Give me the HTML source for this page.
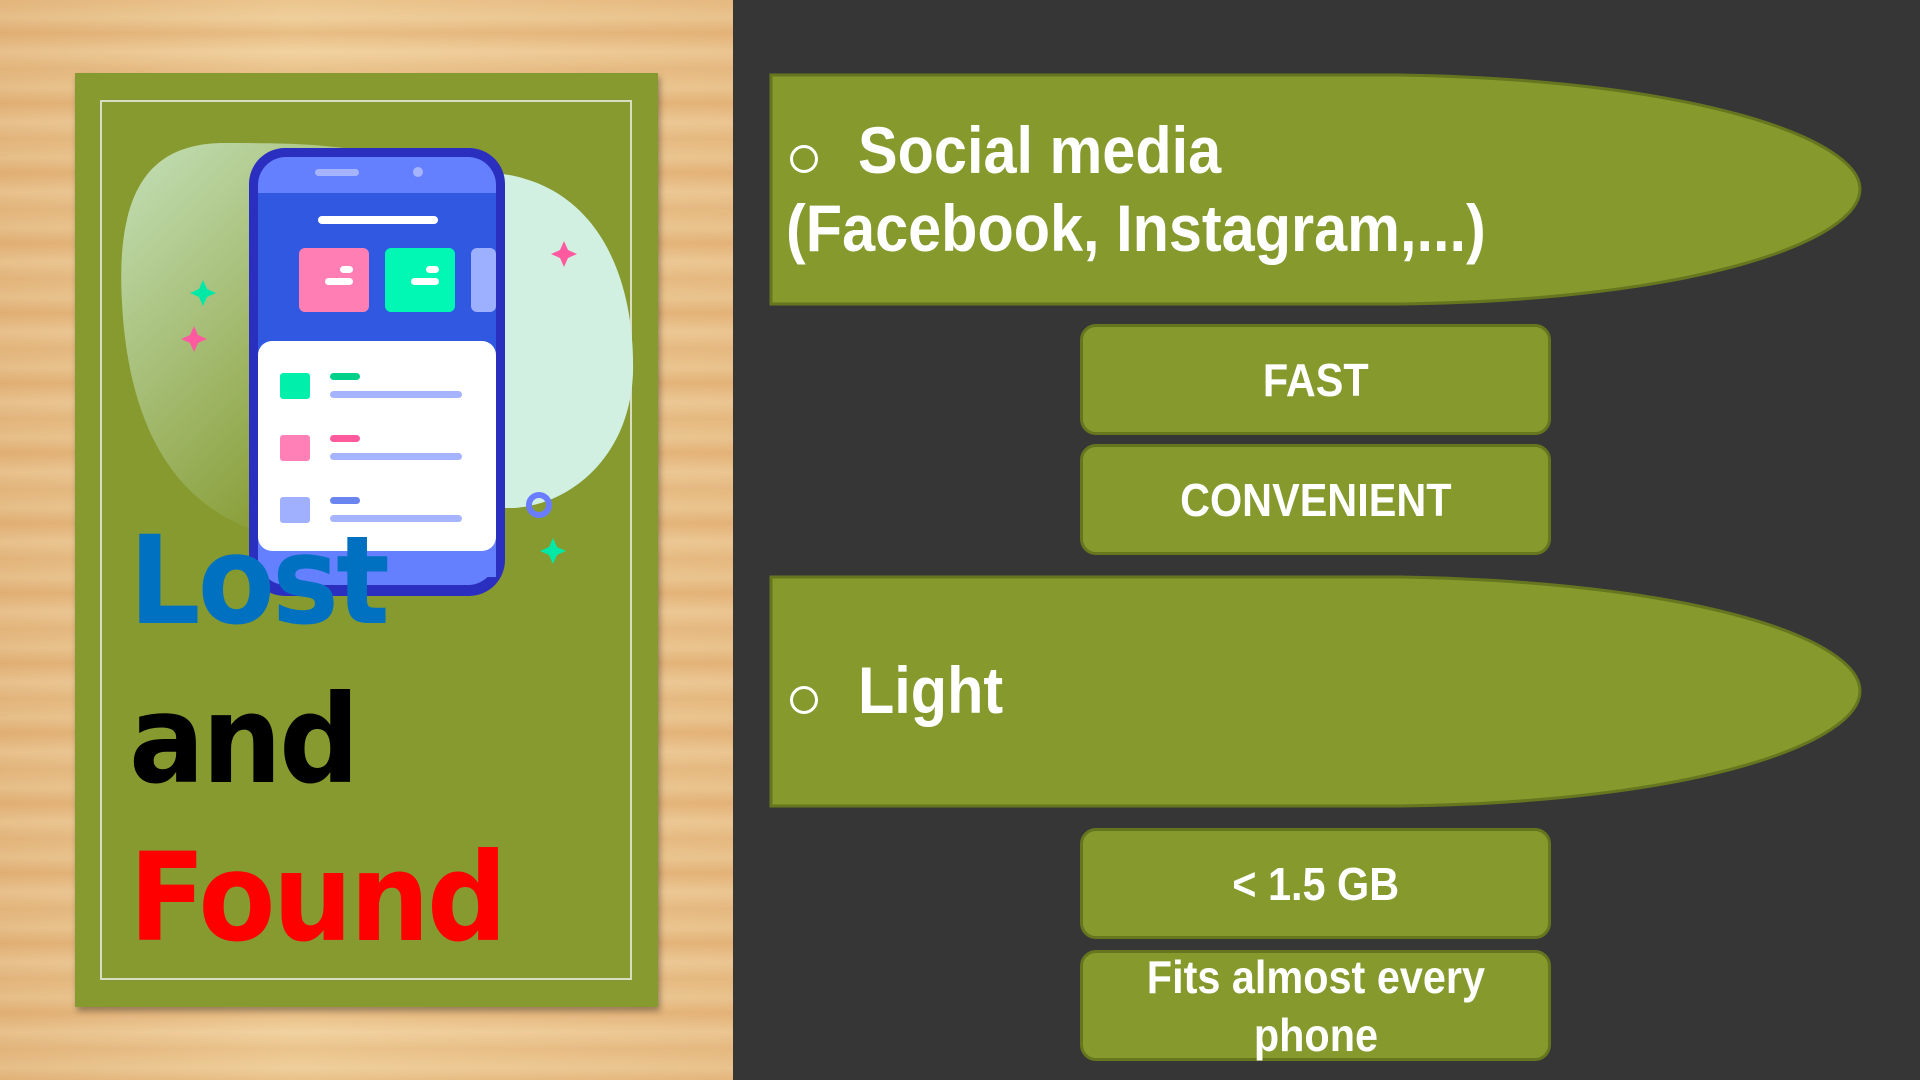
<!DOCTYPE html>
<html><head><meta charset="utf-8"><style>
*{margin:0;padding:0;box-sizing:border-box}
body{width:1920px;height:1080px;overflow:hidden;background:#363636;position:relative;font-family:"Liberation Sans",sans-serif}
.wood{position:absolute;left:0;top:0;width:733px;height:1080px;background:repeating-linear-gradient(180deg,#e8bf86 0px,#eccb97 18px,#e4b67c 33px,#efcf9d 52px,#e6bd84 70px);}
.wood:after{content:"";position:absolute;inset:0;background:linear-gradient(90deg,rgba(210,150,90,.25),rgba(255,230,180,.15) 40%,rgba(220,160,100,.2))}
.panel{position:absolute;left:75px;top:73px;width:583px;height:934px;background:#869a30;box-shadow:2px 4px 6px rgba(0,0,0,.35);overflow:hidden}
.inner{position:absolute;left:25px;top:27px;width:532px;height:880px;border:2px solid #d8dcc0}
.big{position:absolute;left:54px;font-family:"DejaVu Sans","Liberation Sans",sans-serif;font-weight:bold;font-size:122px;letter-spacing:-3px;line-height:1;transform:scaleX(0.92);transform-origin:left top}
.r{position:absolute;color:#fff;font-family:"Liberation Sans",sans-serif;font-weight:bold;transform:scaleX(0.9);transform-origin:left top}
.box{position:absolute;left:1080px;width:471px;height:111px;background:#86992d;border:3px solid #65761f;border-radius:16px;color:#fff;font-family:"Liberation Sans",sans-serif;font-weight:bold;font-size:46px;display:flex;align-items:center;justify-content:center;text-align:center;line-height:58px}
.box span{display:inline-block;transform:scaleX(0.9)}
.bul{position:absolute;width:28px;height:28px;border:3px solid #fff;border-radius:50%}
</style></head><body>
<div class="wood"></div>
<div class="panel">
 <div class="inner"></div>
 <svg width="583" height="934" style="position:absolute;left:0;top:0">
  <defs><linearGradient id="g1" x1="0" y1="0" x2="0.6" y2="1"><stop offset="0" stop-color="#c4e0b8"/><stop offset="1" stop-color="#869a30"/></linearGradient></defs>
  <path d="M150 70 C80 70 40 110 47 230 C55 380 120 460 240 470 L300 470 L300 80 C250 70 200 70 150 70Z" fill="url(#g1)"/>
  <path d="M420 100 C520 110 560 200 558 300 C555 380 500 430 440 435 L420 435Z" fill="#d2f0e2"/>
  <rect x="174" y="75" width="256" height="448" rx="36" fill="#2b2fc0"/>
  <rect x="183" y="84" width="238" height="428" rx="28" fill="#6480ff"/>
  <rect x="183" y="120" width="238" height="310" fill="#3058e0"/>
  <rect x="183" y="268" width="238" height="210" rx="14" fill="#fff"/>
  <rect x="240" y="96" width="44" height="7" rx="3.5" fill="#a6b4ff"/><circle cx="343" cy="99" r="5" fill="#a6b4ff"/>
  <rect x="243" y="143" width="120" height="8" rx="4" fill="#fff"/>
  <rect x="224" y="175" width="70" height="64" rx="6" fill="#ff7fb4"/>
  <rect x="310" y="175" width="70" height="64" rx="6" fill="#00f7b4"/>
  <rect x="396" y="175" width="25" height="64" rx="6" fill="#9db0ff"/>
  <rect x="250" y="205" width="28" height="7" rx="3.5" fill="#fff"/><rect x="265" y="193" width="13" height="7" rx="3.5" fill="#fff"/>
  <rect x="336" y="205" width="28" height="7" rx="3.5" fill="#fff"/><rect x="351" y="193" width="13" height="7" rx="3.5" fill="#fff"/>
  <rect x="205" y="300" width="30" height="26" rx="3" fill="#00f0ac"/><rect x="255" y="300" width="30" height="7" rx="3.5" fill="#00d08a"/><rect x="255" y="318" width="132" height="7" rx="3.5" fill="#a6b4ff"/>
  <rect x="205" y="362" width="30" height="26" rx="3" fill="#ff80b6"/><rect x="255" y="362" width="30" height="7" rx="3.5" fill="#ff5a9e"/><rect x="255" y="380" width="132" height="7" rx="3.5" fill="#a6b4ff"/>
  <rect x="205" y="424" width="30" height="26" rx="3" fill="#a0b0ff"/><rect x="255" y="424" width="30" height="7" rx="3.5" fill="#6a84f0"/><rect x="255" y="442" width="132" height="7" rx="3.5" fill="#a6b4ff"/>
  <rect x="183" y="478" width="238" height="26" fill="#6480ff"/>
  <g fill="#00e8a6"><path d="M128 207 l4 9 9 4 -9 4 -4 9 -4 -9 -9 -4 9 -4z"/><path d="M478 465 l4 9 9 4 -9 4 -4 9 -4 -9 -9 -4 9 -4z"/></g>
  <g fill="#ff5aa0"><path d="M119 253 l4 9 9 4 -9 4 -4 9 -4 -9 -9 -4 9 -4z"/><path d="M489 168 l4 9 9 4 -9 4 -4 9 -4 -9 -9 -4 9 -4z"/></g>
  <circle cx="464" cy="432" r="10" fill="none" stroke="#6a7cff" stroke-width="6"/>
 </svg>
 <div class="big" style="top:447px;color:#0071c1">Lost</div>
 <div class="big" style="top:606px;color:#000">and</div>
 <div class="big" style="top:764px;color:#f00">Found</div>
</div>
<svg width="1920" height="1080" style="position:absolute;left:0;top:0">
 <path d="M771 75 L1400 75 C1700 80 1860 140 1860 189 C1860 240 1700 300 1400 304 L771 304Z" fill="#86992d" stroke="#65761f" stroke-width="3"/>
 <path d="M771 577 L1400 577 C1700 582 1860 640 1860 691 C1860 742 1700 802 1400 806 L771 806Z" fill="#86992d" stroke="#65761f" stroke-width="3"/>
</svg>
<div class="bul" style="left:790px;top:145px"></div>
<div class="r" style="left:858px;top:112px;font-size:66px">Social media</div>
<div class="r" style="left:786px;top:190px;font-size:66px">(Facebook, Instagram,...)</div>
<div class="bul" style="left:790px;top:686px"></div>
<div class="r" style="left:858px;top:652px;font-size:66px">Light</div>
<div class="box" style="top:324px"><span>FAST</span></div>
<div class="box" style="top:444px"><span>CONVENIENT</span></div>
<div class="box" style="top:828px"><span>&lt; 1.5 GB</span></div>
<div class="box" style="top:950px"><span>Fits almost every<br>phone</span></div>
</body></html>
